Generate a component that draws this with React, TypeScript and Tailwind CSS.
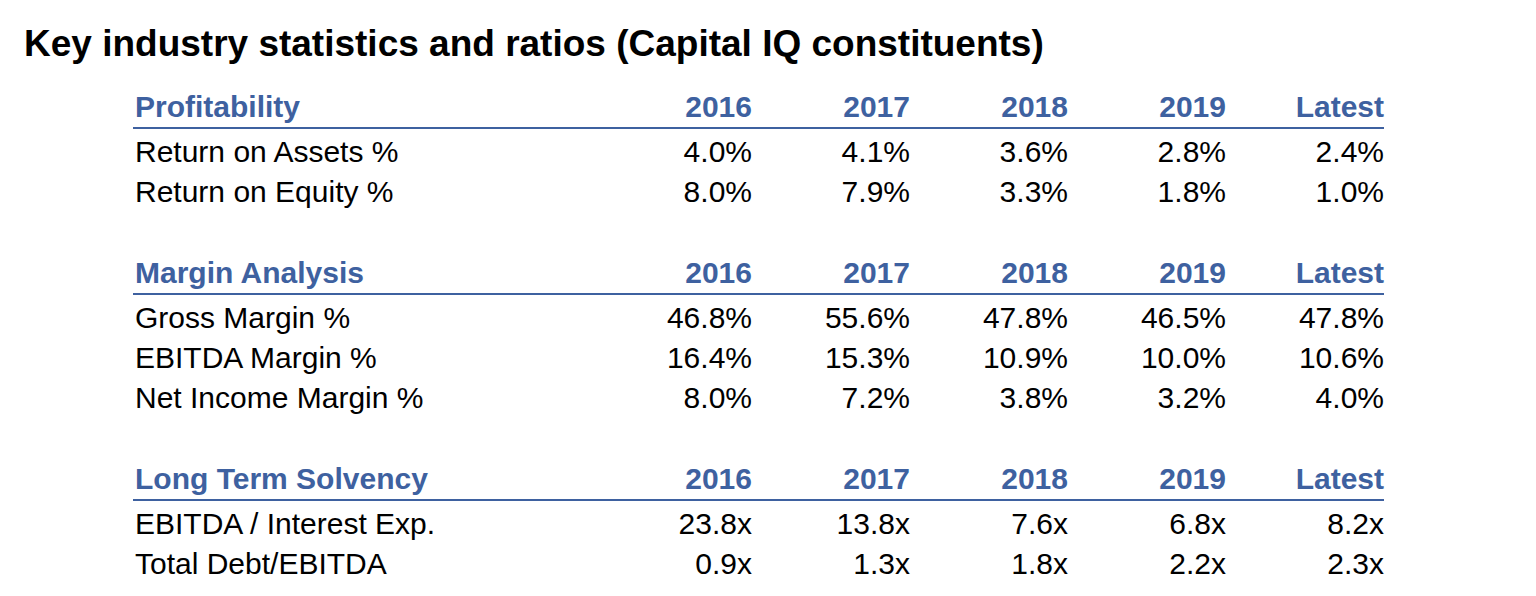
const years = ["2016", "2017", "2018", "2019", "Latest"];

const sections = [
  {
    title: "Profitability",
    rows: [
      { label: "Return on Assets %", values: ["4.0%", "4.1%", "3.6%", "2.8%", "2.4%"] },
      { label: "Return on Equity %", values: ["8.0%", "7.9%", "3.3%", "1.8%", "1.0%"] },
    ],
  },
  {
    title: "Margin Analysis",
    rows: [
      { label: "Gross Margin %", values: ["46.8%", "55.6%", "47.8%", "46.5%", "47.8%"] },
      { label: "EBITDA Margin %", values: ["16.4%", "15.3%", "10.9%", "10.0%", "10.6%"] },
      { label: "Net Income Margin %", values: ["8.0%", "7.2%", "3.8%", "3.2%", "4.0%"] },
    ],
  },
  {
    title: "Long Term Solvency",
    rows: [
      { label: "EBITDA / Interest Exp.", values: ["23.8x", "13.8x", "7.6x", "6.8x", "8.2x"] },
      { label: "Total Debt/EBITDA", values: ["0.9x", "1.3x", "1.8x", "2.2x", "2.3x"] },
    ],
  },
];

const cols = "grid grid-cols-[461px_158px_158px_158px_158px_158px]";

export default function App() {
  return (
    <div className="min-h-[596px] w-[1536px] bg-white pt-[22px] pl-[24px] font-['Liberation_Sans',Arial,sans-serif] text-black">
      <h1 className="text-[37px] font-bold leading-[44px]">
        Key industry statistics and ratios (Capital IQ constituents)
      </h1>

      <div className="ml-[109px] mt-[21px] flex w-[1251px] flex-col gap-[41px]">
        {sections.map((section) => (
          <div key={section.title}>
            <div className={`${cols} h-[42px] border-b-2 border-[#3e61a0] text-[30px] font-bold leading-[40px] text-[#3e61a0]`}>
              <div className="pl-[2px]">{section.title}</div>
              {years.map((y) => (
                <div key={y} className="text-right">
                  {y}
                </div>
              ))}
            </div>
            <div className="pt-[3px]">
              {section.rows.map((row) => (
                <div key={row.label} className={`${cols} h-[40px] text-[30px] leading-[40px]`}>
                  <div className="pl-[2px]">{row.label}</div>
                  {row.values.map((v, i) => (
                    <div key={i} className="text-right">
                      {v}
                    </div>
                  ))}
                </div>
              ))}
            </div>
          </div>
        ))}
      </div>
    </div>
  );
}
